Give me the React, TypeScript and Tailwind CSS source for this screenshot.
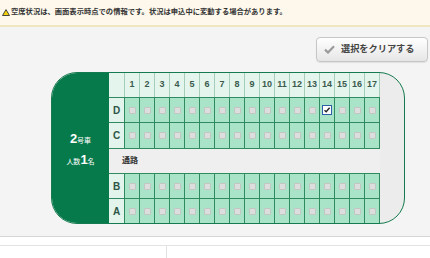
import React from 'react';

const seats = Array.from({ length: 17 }, (_, i) => i + 1);

const Checkbox: React.FC<{ checked?: boolean }> = ({ checked }) =>
  checked ? (
    <div className="w-[10px] h-[10px] border border-[#2d5fa6] bg-white flex items-center justify-center">
      <svg width="8" height="8" viewBox="0 0 8 8">
        <path d="M1.5 4.2 L3.2 5.8 L6.6 1.8" fill="none" stroke="#222" strokeWidth="1.4" />
      </svg>
    </div>
  ) : (
    <div className="w-[7px] h-[7px] rounded-[1px] border border-[#c2c7c4] bg-[#dcdedd]" />
  );

const SeatRow: React.FC<{ label: string; checkedAt?: number; h: string }> = ({ label, checkedAt, h }) => (
  <div className={`grid grid-cols-[15px_repeat(17,14px)] gap-px pr-px bg-[#2f8a5f] ${h}`}>
    <div className="bg-[#e2f4eb] flex items-center justify-center text-[10px] font-bold text-[#2d5546]">{label}</div>
    {seats.map((n) => (
      <div key={n} className="bg-[#a9e4c9] flex items-center justify-center">
        <Checkbox checked={n === checkedAt} />
      </div>
    ))}
  </div>
);

export default function App() {
  return (
    <div className="w-[430px] h-[258px] overflow-hidden flex flex-col bg-white" style={{ fontFamily: '"Liberation Sans", "Noto Sans CJK JP", sans-serif' }}>
      {/* Notice */}
      <div className="h-[27px] shrink-0 bg-[#fdf8eb] border-b-2 border-[#efe7c1] flex items-center pl-[2px] gap-[1px]">
        <svg width="8" height="7" viewBox="0 0 8 7">
          <path d="M4 0.6 L7.5 6.5 L0.5 6.5 Z" fill="#f5d20a" stroke="#333" strokeWidth="0.9" />
        </svg>
        <span className="text-[7.3px] font-bold text-[#333]">空席状況は、画面表示時点での情報です。状況は申込中に変動する場合があります。</span>
      </div>

      {/* Seat map area */}
      <div className="h-[210px] shrink-0 bg-[#f4f4f4] border-b border-[#d6d6d6] flex flex-col">
        <div className="flex justify-end pr-[2px] pt-[10px]">
          <button className="w-[112px] h-[25px] rounded-[4px] border border-[#c6c6c6] bg-gradient-to-b from-white to-[#e6e6e6] flex items-center pl-[7px] gap-[6px] shadow-[0_1px_1px_rgba(0,0,0,0.08)]">
            <svg width="11" height="9" viewBox="0 0 11 9">
              <path d="M1 4.6 L4 7.5 L10 1.2" fill="none" stroke="#9a9a9a" strokeWidth="2.2" />
            </svg>
            <span className="text-[9.2px] font-bold text-[#444]">選択をクリアする</span>
          </button>
        </div>

        <div className="mt-[10px] ml-[51px] w-[354px] h-[152px] rounded-[26px] border-[1.5px] border-[#157a4f] bg-[#ececec] overflow-hidden flex">
          {/* Car info */}
          <div className="w-[57px] bg-[#077a4c] flex flex-col items-center justify-center gap-[8px] text-white pt-[1px]">
            <div className="flex items-baseline">
              <span className="text-[13px] font-bold leading-none">2</span>
              <span className="text-[7px] leading-none">号車</span>
            </div>
            <div className="flex items-baseline">
              <span className="text-[7px] leading-none">人数</span>
              <span className="text-[13px] font-bold leading-none">1</span>
              <span className="text-[7px] leading-none">名</span>
            </div>
          </div>

          {/* Seat grid */}
          <div className="flex flex-col gap-px bg-[#2f8a5f]">
            <div className="grid grid-cols-[15px_repeat(17,14px)] gap-px pr-px bg-[#a6cdb9] h-[24px]">
              <div className="bg-[#e4f5ed]" />
              {seats.map((n) => (
                <div key={n} className="bg-[#e4f5ed] flex items-center justify-center text-[9px] font-bold text-[#3b5a4e]">
                  {n}
                </div>
              ))}
            </div>
            <SeatRow label="D" checkedAt={14} h="h-[24px]" />
            <SeatRow label="C" h="h-[25px]" />
            <div className="h-[24px] bg-[#efefef] flex items-center pl-[13px] text-[8px] font-bold text-[#333]">通路</div>
            <SeatRow label="B" h="h-[24px]" />
            <SeatRow label="A" h="h-[24px]" />
          </div>

          <div className="flex-1" />
        </div>
      </div>

      {/* Lower table */}
      <div className="h-[9px] shrink-0 bg-white border-b border-[#e2e2e2]" />
      <div className="flex-1 flex bg-white">
        <div className="w-[167px] border-r border-[#e2e2e2]" />
        <div className="flex-1" />
      </div>
    </div>
  );
}
